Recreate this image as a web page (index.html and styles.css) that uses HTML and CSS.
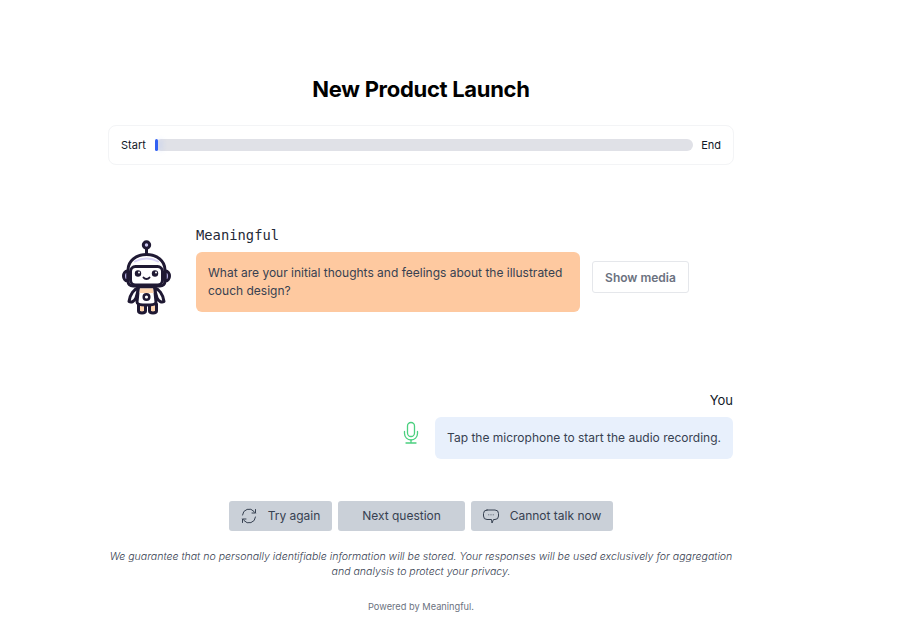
FILE: index.html
```html
<!DOCTYPE html>
<html>

<head>
  <meta charset="utf-8">
  <title>New Product Launch</title>
  <link rel="stylesheet" href="styles.css">
</head>

<body>
  <main>
    <h1>New Product Launch</h1>

    <div class="progress-card">
      <span>Start</span>
      <div class="track">
        <div class="fill"></div>
      </div>
      <span>End</span>
    </div>

    <section class="bot-row">
      <svg class="robot" width="56" height="80" viewBox="0 0 56 80" fill="none" stroke="#1f1933" stroke-width="3" stroke-linecap="round" stroke-linejoin="round">
        <circle cx="28.500" cy="7" r="3.200" fill="#c9c4ee"/>
        <path d="M28.500 10.500v6"/>
        <path d="M10 33h-.5c-2.500 0-4 2.500-4 5s1.500 5 4 5h.5z" fill="#b9b2e6"/>
        <path d="M47 33h.5c2.500 0 4 2.500 4 5s-1.500 5-4 5h-.5z" fill="#b9b2e6"/>
        <path d="M10 43V32c0-9 8-15.500 18.500-15.500S47 23 47 32v11c0 3-2 5-5 5H15c-3 0-5-2-5-5z" fill="#fff"/>
        <path d="M17 23.500c3.500-2 7.500-3 11.500-3s8 1 11.500 3" stroke="#d8d3f6" stroke-width="2"/>
        <rect x="12.500" y="28.500" width="32" height="18.500" rx="5" fill="#fff"/>
        <circle cx="20" cy="35.500" r="3.200" fill="#1f1933" stroke="none"/>
        <circle cx="37" cy="35.500" r="3.200" fill="#1f1933" stroke="none"/>
        <circle cx="21" cy="34.500" r="1" fill="#fff" stroke="none"/>
        <circle cx="38" cy="34.500" r="1" fill="#fff" stroke="none"/>
        <path d="M25.500 39.500c1.500 2 4.500 2 6 0" stroke-width="2"/>
        <path d="M21 49.500c-5 1.500-9 7-10 14 2.500 1.500 5 0 7-3.500z" fill="#fff"/>
        <path d="M36 49.500c5 1.500 9 7 10 14-2.500 1.500-5 0-7-3.500z" fill="#fff"/>
        <path d="M20.500 66v7c0 2.500 7 2.500 7 0v-7" fill="#fdd3ac"/>
        <path d="M31.500 66v7c0 2.500 7 2.500 7 0v-7" fill="#fdd3ac"/>
        <path d="M20.500 49h16l1.500 15c0 2-2 3-9.500 3s-9.500-1-9.500-3z" fill="#fff"/>
        <path d="M22 50.500h13l.5 4.500h-14z" fill="#fdd3ac" stroke="none"/>
        <circle cx="28.500" cy="59" r="2.800" stroke-width="2.500"/>
      </svg>
      <div class="bot-body">
        <div class="bot-name">Meaningful</div>
        <div class="bot-line">
          <div class="bubble bubble-bot">What are your initial thoughts and feelings about the illustrated couch design?</div>
          <button class="btn-media">Show media</button>
        </div>
      </div>
    </section>

    <section class="you-row">
      <div class="you-name">You</div>
      <div class="you-line">
        <svg class="mic" width="24" height="24" viewBox="0 0 24 24" fill="none" stroke="#4bd07f" stroke-width="1.300" stroke-linecap="round" stroke-linejoin="round">
          <rect x="8.500" y="1.500" width="7" height="14" rx="3.500"/>
          <path d="M5.500 10.500v2a6.500 6.500 0 0 0 13 0v-2"/>
          <path d="M12 19v3M7 22h10"/>
        </svg>
        <div class="bubble bubble-you">Tap the microphone to start the audio recording.</div>
      </div>
    </section>

    <div class="actions">
      <button class="btn btn-try">
        <svg width="16" height="16" viewBox="0 0 16 16" fill="none" stroke="#374151" stroke-width="1" stroke-linecap="round" stroke-linejoin="round">
          <path d="M1.500 7A6.500 6.500 0 0 1 13 3.500L14.500 5"/>
          <path d="M14.500 1.500V5H11"/>
          <path d="M14.500 9A6.500 6.500 0 0 1 3 12.500L1.500 11"/>
          <path d="M1.500 14.500V11H5"/>
        </svg>
        Try again
      </button>
      <button class="btn btn-next">Next question</button>
      <button class="btn btn-talk">
        <svg width="16" height="16" viewBox="0 0 16 16" fill="none" stroke="#374151" stroke-width="1" stroke-linecap="round" stroke-linejoin="round">
          <path d="M4 2h8a3.500 3.500 0 0 1 3.500 3.500v2.500a3.500 3.500 0 0 1-3.500 3.500h-1.500L9 15 8.500 11.500H4A3.500 3.500 0 0 1 .5 8V5.500A3.500 3.500 0 0 1 4 2z"/>
          <path d="M5.800 6.800h.01M8 6.800h.01M10.200 6.800h.01"/>
        </svg>
        Cannot talk now
      </button>
    </div>

    <p class="privacy">We guarantee that no personally identifiable information will be stored. Your responses will be used exclusively for aggregation and analysis to protect your privacy.</p>
    <p class="powered">Powered by Meaningful.</p>
  </main>
</body>

</html>
```

FILE: styles.css
```css
html,
body {
  margin: 0;
  background: #fff;
}

body {
  font-family: Inter, "Liberation Sans", sans-serif;
  color: #1f2937;
}

main {
  width: 626px;
  margin: 0 0 0 108px;
  padding-top: 75px;
}

h1 {
  margin: 0;
  font-size: 22px;
  line-height: 28px;
  font-weight: 700;
  text-align: center;
  color: #000;
  letter-spacing: -0.3px;
}

.progress-card {
  display: flex;
  align-items: center;
  gap: 9px;
  height: 38px;
  margin-top: 22px;
  padding: 0 12px;
  border: 1px solid #f3f4f6;
  border-radius: 8px;
  font-size: 11px;
  color: #111827;
}

.track {
  flex: 1;
  height: 12px;
  margin-right: -1px;
  background: #e0e1e7;
  border-radius: 6px;
}

.fill {
  width: 3px;
  height: 100%;
  background: #3160f2;
  border-radius: 2px;
  box-shadow: 4px 0 5px rgba(150, 180, 255, 0.3);
}

.bot-row {
  display: flex;
  gap: 22px;
  margin-top: 60px;
  padding-left: 10px;
}

.robot {
  align-self: flex-end;
  margin-bottom: -6px;
}

.bot-name {
  font-family: "DejaVu Sans Mono", "Liberation Mono", monospace;
  font-size: 13.800px;
  line-height: 20px;
  color: #1f2937;
}

.bot-line {
  display: flex;
  align-items: flex-start;
  gap: 12px;
  margin-top: 7px;
}

.bubble {
  font-size: 12px;
  line-height: 18px;
  color: #374151;
  border-radius: 6px;
  padding: 12px;
}

.bubble-bot {
  width: 360px;
  background: #fec9a0;
}

.btn-media {
  width: 97px;
  height: 32px;
  margin-top: 9px;
  padding: 0;
  background: #fff;
  border: 1px solid #e5e7eb;
  border-radius: 3px;
  font: 600 12px Inter, "Liberation Sans", sans-serif;
  color: #6b7280;
}

.you-row {
  margin-top: 79px;
  margin-right: 1px;
}

.you-name {
  font-size: 13px;
  line-height: 18px;
  text-align: right;
  color: #111827;
}

.you-line {
  display: flex;
  justify-content: flex-end;
  gap: 12px;
  margin-top: 8px;
}

.mic {
  margin-top: 4px;
}

.bubble-you {
  background: #e8f0fc;
}

.actions {
  display: flex;
  justify-content: center;
  gap: 6px;
  margin-top: 42px;
}

.btn {
  display: flex;
  align-items: center;
  justify-content: center;
  gap: 11px;
  height: 30px;
  padding: 0 0 1px;
  background: #cad0d8;
  border: 0;
  border-radius: 3px;
  font: 400 12px Inter, "Liberation Sans", sans-serif;
  color: #374151;
}

.btn-try {
  width: 103px;
}

.btn-next {
  width: 127px;
}

.btn-talk {
  width: 142px;
}

.privacy {
  margin: 18px 0 0;
  font-size: 10.550px;
  line-height: 15px;
  font-style: italic;
  font-weight: 300;
  text-align: center;
  color: #374151;
}

.powered {
  margin: 21px 0 0;
  font-size: 9.250px;
  line-height: 14px;
  text-align: center;
  color: #6b7280;
}
```
